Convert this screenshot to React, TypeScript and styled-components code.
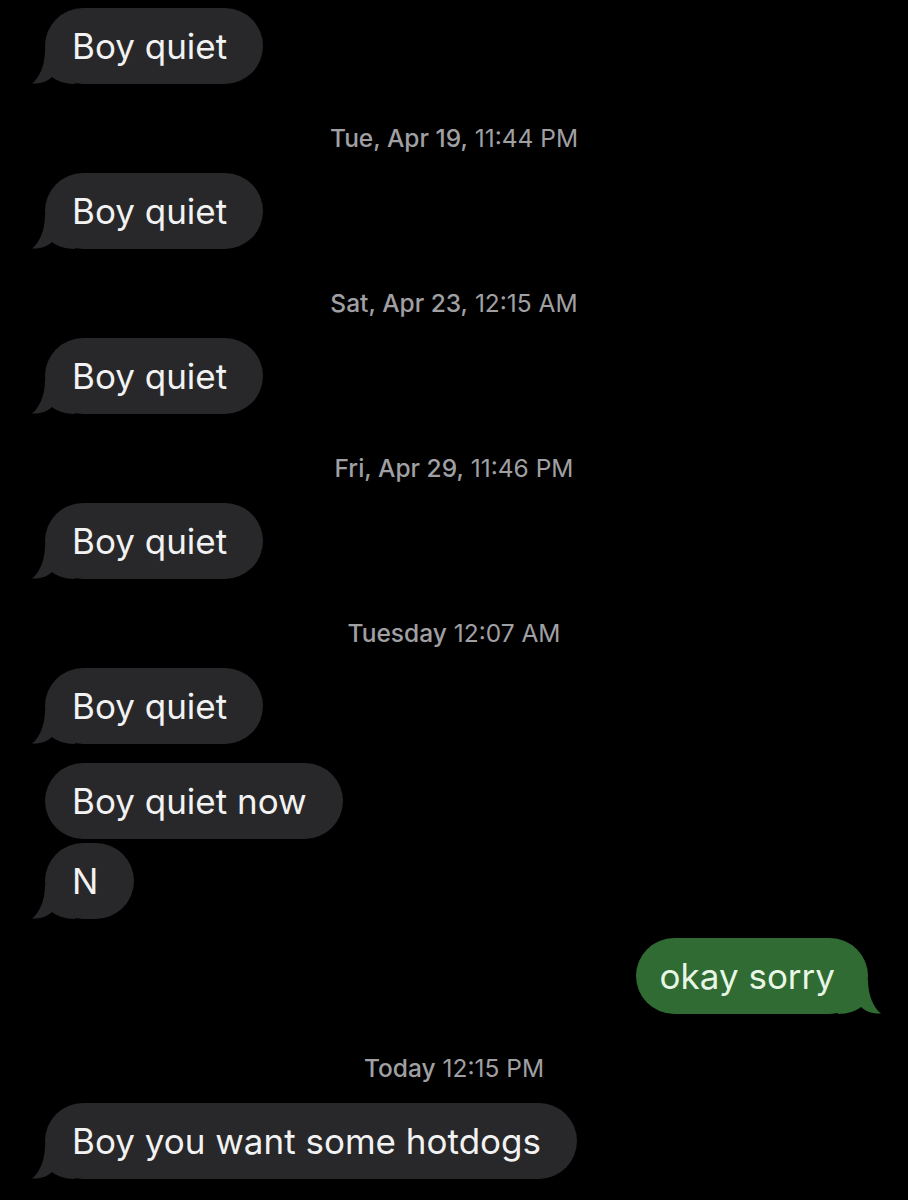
import styled, { createGlobalStyle } from "styled-components";

const GlobalStyle = createGlobalStyle`
  html, body {
    margin: 0;
    padding: 0;
    background: #000;
  }
  body {
    font-family: Inter, "Liberation Sans", sans-serif;
    -webkit-font-smoothing: antialiased;
  }
`;

const Thread = styled.div`
  width: 908px;
  height: 1200px;
  overflow: hidden;
  box-sizing: border-box;
  padding: 8px 40px 0 45px;
  display: flex;
  flex-direction: column;
  background: #000;
`;

const Row = styled.div<{ $mine?: boolean; $gap: number }>`
  display: flex;
  justify-content: ${(p) => (p.$mine ? "flex-end" : "flex-start")};
  margin-top: ${(p) => p.$gap}px;
`;

const Bubble = styled.div<{ $mine?: boolean }>`
  position: relative;
  height: 76px;
  box-sizing: border-box;
  display: flex;
  align-items: center;
  padding: ${(p) => (p.$mine ? "0 33px 0 24px" : "0 36px 0 27px")};
  border-radius: 38px;
  background: ${(p) => (p.$mine ? "#2f6b32" : "#28282a")};
  color: ${(p) => (p.$mine ? "#e8f6e6" : "#f2f2f2")};
  font-size: 35px;
  font-weight: 400;
  line-height: 1;
  white-space: nowrap;
`;

const Label = styled.span`
  position: relative;
`;

const Tail = styled.svg<{ $mine?: boolean }>`
  position: absolute;
  bottom: 0;
  width: 44px;
  height: 40px;
  ${(p) => (p.$mine ? "right: -14px; transform: scaleX(-1);" : "left: -14px;")}
`;

const Stamp = styled.div`
  margin: 41px -40px 22px -45px;
  height: 26px;
  line-height: 26px;
  text-align: center;
  font-size: 24.5px;
  color: #a0a0a4;
`;

const Day = styled.span`
  font-weight: 500;
`;

const Time = styled.span`
  font-weight: 400;
`;

type Item =
  | { kind: "msg"; text: string; mine?: boolean; tail?: boolean; gap: number }
  | { kind: "stamp"; day: string; time: string };

const items: Item[] = [
  { kind: "msg", text: "Boy quiet", tail: true, gap: 0 },
  { kind: "stamp", day: "Tue, Apr 19,", time: "11:44 PM" },
  { kind: "msg", text: "Boy quiet", tail: true, gap: 0 },
  { kind: "stamp", day: "Sat, Apr 23,", time: "12:15 AM" },
  { kind: "msg", text: "Boy quiet", tail: true, gap: 0 },
  { kind: "stamp", day: "Fri, Apr 29,", time: "11:46 PM" },
  { kind: "msg", text: "Boy quiet", tail: true, gap: 0 },
  { kind: "stamp", day: "Tuesday", time: "12:07 AM" },
  { kind: "msg", text: "Boy quiet", tail: true, gap: 0 },
  { kind: "msg", text: "Boy quiet now", gap: 19 },
  { kind: "msg", text: "N", tail: true, gap: 4 },
  { kind: "msg", text: "okay sorry", mine: true, tail: true, gap: 19 },
  { kind: "stamp", day: "Today", time: "12:15 PM" },
  { kind: "msg", text: "Boy you want some hotdogs", tail: true, gap: 0 },
];

const BubbleTail = ({ mine }: { mine?: boolean }) => (
  <Tail $mine={mine} viewBox="0 0 44 40">
    <path
      d="M14 6 C14 22 8 34 1 39.5 C10 40 17 37 21 33 C26 37 34 40 44 40 L44 6 Z"
      fill={mine ? "#2f6b32" : "#28282a"}
    />
  </Tail>
);

const App = () => {
  return (
    <>
      <GlobalStyle />
      <Thread>
        {items.map((item, i) =>
          item.kind === "stamp" ? (
            <Stamp key={i}>
              <Day>{item.day}</Day> <Time>{item.time}</Time>
            </Stamp>
          ) : (
            <Row key={i} $mine={item.mine} $gap={item.gap}>
              <Bubble $mine={item.mine}>
                {item.tail && <BubbleTail mine={item.mine} />}
                <Label>{item.text}</Label>
              </Bubble>
            </Row>
          )
        )}
      </Thread>
    </>
  );
};

export default App;
